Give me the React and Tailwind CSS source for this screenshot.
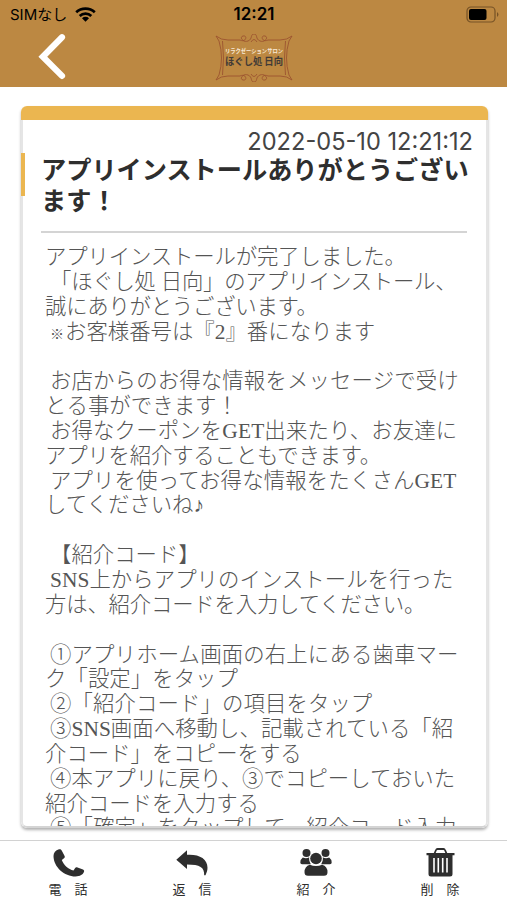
import React from "react";
// text, left indent, letter spacing
const lines = [
  ["アプリインストールが完了しました。", 0, -0.15],
  ["「ほぐし処 日向」のアプリインストール、", 5, -0.25],
  ["誠にありがとうございます。", 0, -0.25],
  ["※お客様番号は『2』番になります", 5, 0],
  ["", 0, 0],
  ["お店からのお得な情報をメッセージで受け", 5, 0.15],
  ["とる事ができます！", 0, 0.05],
  ["お得なクーポンをGET出来たり、お友達に", 5, 0.15],
  ["アプリを紹介することもできます。", 0, -0.2],
  ["アプリを使ってお得な情報をたくさんGET", 5, 0.15],
  ["してくださいね♪", 0, 0],
  ["", 0, 0],
  ["【紹介コード】", 5, 0],
  ["SNS上からアプリのインストールを行った", 5, 0.05],
  ["方は、紹介コードを入力してください。", 0, -0.2],
  ["", 0, 0],
  ["①アプリホーム画面の右上にある歯車マー", 5, 0.15],
  ["ク「設定」をタップ", 0, 0.05],
  ["②「紹介コード」の項目をタップ", 5, 0.1],
  ["③SNS画面へ移動し、記載されている「紹", 5, 0.05],
  ["介コード」をコピーをする", 0, 0],
  ["④本アプリに戻り、③でコピーしておいた", 5, 0.05],
  ["紹介コードを入力する", 0, 0],
  ["⑤「確定」をタップして、紹介コード入力", 5, 0.1],
];

function BodyText({ text }) {
  return text.split(/(※|[A-Z0-9]+)/).map((part, i) => {
    if (part === "※") {
      return <span key={i} className="mr-px text-[14px] font-bold">{part}</span>;
    }
    if (/^[A-Z0-9]+$/.test(part)) {
      return <span key={i} className="font-['Liberation_Serif',serif] font-normal">{part}</span>;
    }
    return part;
  });
}

function StatusBar() {
  return (
    <div className="flex h-[29px] items-center justify-between pl-[10px] pr-[7px] text-black">
      <div className="flex w-[180px] items-center gap-[8px]">
        <span className="whitespace-nowrap font-['Inter','Noto_Sans_CJK_JP',sans-serif] text-[15px] leading-none">SIMなし</span>
        <svg width="21" height="15" viewBox="0 0 21 15" fill="none" stroke="currentColor" strokeWidth="2.7">
          <path d="M1.2 5.2C6.4.4 14.600.4 19.800 5.200M4.700 8.900c3.200-3 8.400-3 11.600 0" />
          <path d="M7 11.200c2-1.800 5-1.800 7 0l-3.500 3.500z" fill="currentColor" stroke="none" />
        </svg>
      </div>
      <span className="mr-[2px] whitespace-nowrap font-['Inter',sans-serif] text-[17px] font-semibold leading-none">12:21</span>
      <div className="flex w-[180px] justify-end">
        <svg width="34" height="17" viewBox="0 0 34 17">
          <rect x="1" y="1" width="28" height="15" rx="4" fill="none" stroke="#765226" strokeWidth="1.2" />
          <rect x="3" y="3" width="17.500" height="11" rx="2" fill="#000" />
          <path d="M31 6q3 2.500 0 5z" fill="#765226" />
        </svg>
      </div>
    </div>
  );
}

function Logo() {
  return (
    <svg width="78" height="48" viewBox="0 0 78 48">
      <g fill="none" stroke="#9c5430" strokeWidth="0.9">
        <path d="M1 2q5 4 12 4h12M77 2q-5 4-12 4H53M1 46q5-4 12-4h12M77 46q-5-4-12-4H53" />
        <path d="M4 7q5 17 0 34M74 7q-5 17 0 34M7.500 7q2 17 0 34M70.500 7q-2 17 0 34" />
        <path d="M25 6c6 3 8-5 3-4-4 1 0 7 5 5 5-2 2-7 6-7s1 5 6 7c5 2 9-4 5-5-5-1-3 7 3 4M36 8q3-5 6 0" />
        <path d="M25 42c6-3 8 5 3 4-4-1 0-7 5-5 5 2 2 7 6 7s1-5 6-7c5-2 9 4 5 5-5 1-3-7 3-4M36 40q3 5 6 0" />
        <path d="M1 2l3 5M77 2l-3 5M1 46l3-5M77 46l-3-5" />
      </g>
      <text x="39" y="18.500" textAnchor="middle" textLength="58" lengthAdjust="spacingAndGlyphs" fill="#f8e9d6" className="font-['Noto_Sans_CJK_JP',sans-serif] text-[5.500px] font-bold">リラクゼーションサロン</text>
      <text x="39" y="31" textAnchor="middle" textLength="58" lengthAdjust="spacingAndGlyphs" fill="#433b36" className="font-['Noto_Sans_CJK_JP',sans-serif] text-[10px] font-bold">ほぐし処 日向</text>
    </svg>
  );
}

function PhoneIcon() {
  return (
    <svg className="ml-px" width="32" height="28" viewBox="0 0 32 28" fill="currentColor">
      <path d="M6 .3C2.500 1.300.5 4 .5 7c0 11 11 20.500 22 20.500 4.500 0 7.500-2 8.500-4.700.4-1.200 0-1.800-1-2.300l-5.500-2.100c-1.200-.4-1.900-.1-2.500.8l-1.500 2.300c-5-1.300-10-5.500-11.700-10.500L11 9.300c.8-.6 1-1.200.6-2.300L8.700 1.500C8 .4 7.300 0 6 .3z" />
    </svg>
  );
}

function ReplyIcon() {
  return (
    <svg width="32" height="26" viewBox="0 0 32 26" fill="currentColor">
      <path d="M.3 9.700 11 .3v4.500c12-.8 20.500 3.800 20.500 13 0 2.600-.8 5-2 7.400h-1.300C28.500 17.500 24 14.600 11 14.600v4.500z" />
    </svg>
  );
}

function UsersIcon() {
  return (
    <svg width="32" height="27" viewBox="0 0 32 27" fill="currentColor">
      <circle cx="6.500" cy="4.100" r="4" />
      <circle cx="25.500" cy="4.100" r="4" />
      <path d="M2.800 8.600q3.700 1.600 6.500-.4-.5 4.100 1.500 7H2Q.3 15.200.3 13.500q0-3 2.500-4.900zM29.200 8.600q-3.700 1.600-6.500-.4.500 4.100-1.500 7H30q1.700 0 1.700-1.700 0-3-2.500-4.900z" />
      <circle cx="16" cy="9.500" r="6.600" fill="white" />
      <circle cx="16" cy="9.500" r="5.800" />
      <path d="M9.800 15.700Q16 18.300 22.200 15.700q5.300 1.500 5.300 7.500 0 3.500-3.500 3.500H8q-3.500 0-3.500-3.500 0-6 5.300-7.500z" />
    </svg>
  );
}

function TrashIcon() {
  return (
    <svg width="29" height="29" viewBox="0 0 29 29">
      <path d="M8.500 5.500 10 2q.4-1 1.500-1h6q1.100 0 1.500 1l1.500 3.500" fill="none" stroke="currentColor" strokeWidth="1.800" />
      <path d="M.5 5h28v2.200h-2V26q0 2.500-2.500 2.500H5Q2.500 28.500 2.500 26V7.200h-2z" fill="currentColor" />
      <path d="M8 10v14.500M12.300 10v14.500M16.700 10v14.500M21 10v14.500" stroke="white" strokeWidth="1.600" />
    </svg>
  );
}

function Tab({ label, icon }) {
  return (
    <div className="flex w-[124px] flex-col items-center">
      <div className="flex h-[31px] items-center">{icon}</div>
      <span className="mt-[3px] whitespace-pre font-['Noto_Sans_CJK_JP',sans-serif] text-[13px] leading-[16px]">{label}</span>
    </div>
  );
}

export default function App() {
  return (
    <div className="flex h-[900px] w-[507px] flex-col overflow-hidden bg-white text-[#2e2e2e]">
      <header className="h-[87px] shrink-0 bg-[#bc8842]">
        <StatusBar />
        <div className="grid h-[58px] grid-cols-[1fr_78px_1fr] items-start">
          <svg className="ml-[36px] mt-[3px]" width="32" height="50" viewBox="0 0 32 50" fill="none" stroke="white" strokeWidth="6.200" strokeLinecap="round">
            <path d="M26 5.300 6.800 24.700l19.200 19.200" strokeLinejoin="miter" />
          </svg>
          <div className="mt-[5px]"><Logo /></div>
        </div>
      </header>

      <main className="h-[753px] shrink-0 pl-[21px] pr-[19px] pt-[19px]">
        <section className="flex h-[722px] flex-col overflow-hidden rounded-[6px] bg-white shadow-[0_2px_3px_#b0b0b0]">
          <div className="h-[14px] shrink-0 bg-[#ebb650]" />
          <div className="min-h-0 flex-1 rounded-b-[6px] border-x-2 border-b-2 border-x-[#e5e5e5] border-b-[#d4d4d4]">
            <div className="flex h-[33px] items-end justify-end pr-[13px]">
              <time className="whitespace-nowrap font-['Inter',sans-serif] text-[23.600px] leading-[23px] text-[#444]">2022-05-10 12:21:12</time>
            </div>
            <div className="-ml-[2px] flex">
              <div className="h-[43px] w-[4px] bg-[#ebb650]" />
              <div className="ml-[16px] h-[80px] w-[426px] border-b-2 border-[#d4d4d4]">
                <h1 className="whitespace-nowrap font-['Noto_Sans_CJK_JP',sans-serif] text-[25.200px] font-bold leading-[31px]">
                  アプリインストールありがとうござい<br />ます！
                </h1>
              </div>
            </div>
            <div className="h-[593px] overflow-hidden pl-[22px] pt-[12px] font-['Liberation_Serif','Noto_Sans_CJK_JP',serif] text-[21.400px] font-light leading-[24.850px] text-[#555]">
              {lines.map(([text, indent, spacing], i) => (
                <p key={i} className="h-[24.850px] whitespace-nowrap" style={{ paddingLeft: indent, letterSpacing: spacing }}>
                  <BodyText text={text} />
                </p>
              ))}
            </div>
          </div>
        </section>
      </main>

      <nav className="flex h-[60px] shrink-0 border-t border-[#d2d2d2] pl-[6px] pt-[6px]">
        <Tab label="電　話" icon={<PhoneIcon />} />
        <Tab label="返　信" icon={<ReplyIcon />} />
        <Tab label="紹　介" icon={<UsersIcon />} />
        <Tab label="削　除" icon={<TrashIcon />} />
      </nav>
    </div>
  );
}
